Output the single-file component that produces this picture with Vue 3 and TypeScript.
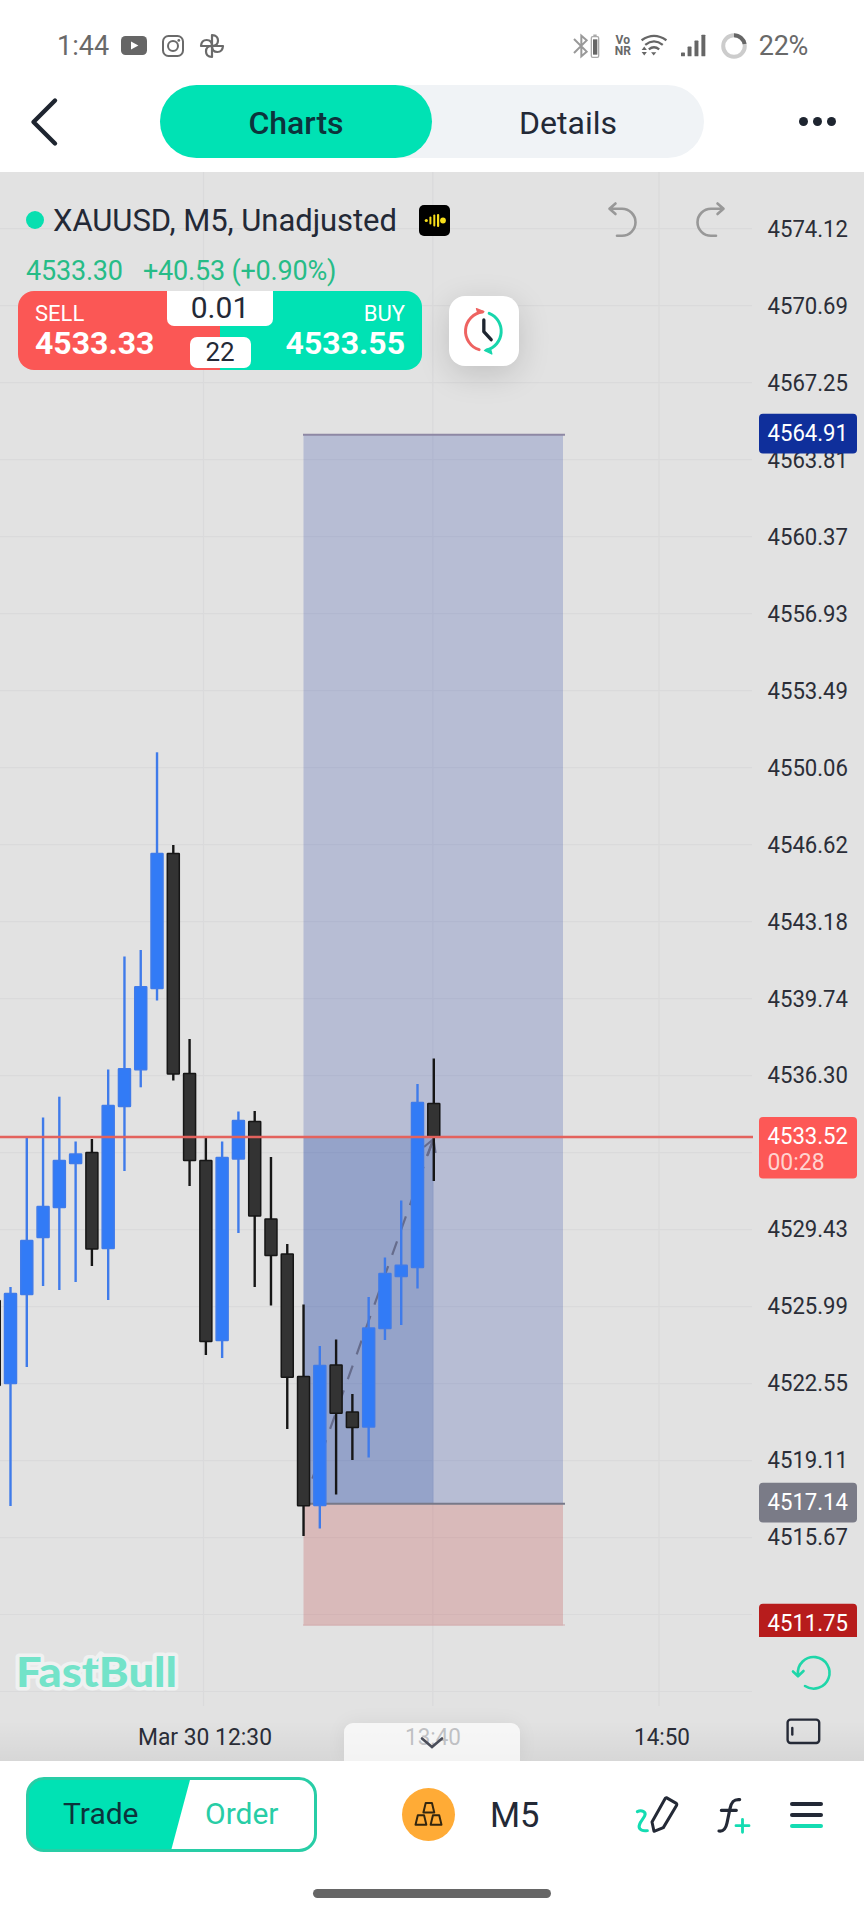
<template>
  <div class="page">
    <!-- status bar -->
    <div class="status-bar">
      <span class="status-time">1:44</span>
      <svg class="icon-youtube" viewBox="0 0 26 19">
        <rect width="26" height="19" rx="4.5" fill="#666" />
        <path d="M10 5.4 17.4 9.5 10 13.6Z" fill="#fff" />
      </svg>
      <svg class="icon-instagram" viewBox="0 0 24 24" fill="none" stroke="#6a6a6a" stroke-width="2">
        <rect x="2" y="2" width="20" height="20" rx="5.5" />
        <circle cx="12" cy="12" r="5" />
        <circle cx="17.8" cy="6.4" r="1.4" fill="#6a6a6a" stroke="none" />
      </svg>
      <svg class="icon-photos" viewBox="0 0 26 26" fill="none" stroke="#6a6a6a" stroke-width="2.2" stroke-linejoin="round">
        <path v-for="angle in [0, 90, 180, 270]" :key="angle" d="M13 13V2c4 .3 6 2.6 6 5.6S17 13 13 13Z" :transform="`rotate(${angle} 13 13)`" />
      </svg>

      <div class="status-right">
        <svg class="icon-bluetooth" viewBox="0 0 84 78" fill="none">
          <path d="M6 18 44 56 28 70V8L44 22 6 60" stroke="#999" stroke-width="6" />
          <rect x="58" y="11" width="22" height="62" rx="4" stroke="#aaa" stroke-width="4" />
          <path d="M64 7h10" stroke="#aaa" stroke-width="5" />
          <path d="M69.5 19v46" stroke="#666" stroke-width="13" />
        </svg>
        <span class="vonr"><span>Vo</span><span>NR</span></span>
        <svg class="icon-wifi" viewBox="0 0 80 70" fill="none" stroke="#666" stroke-width="7">
          <path d="M2 19Q40-8 78 19" />
          <path d="M13 33Q40 12 67 33" />
          <path d="M24 47Q40 34 56 47" />
          <path d="M31 56h16l-8 10ZM2 49l8-11 8 11ZM2 55h16l-8 11Z" fill="#666" stroke="none" />
        </svg>
        <svg class="icon-signal" viewBox="0 0 76 68" fill="#666">
          <rect x="0" y="55" width="12" height="12" rx="2" />
          <rect x="20" y="37" width="12" height="30" rx="2" />
          <rect x="41" y="19" width="12" height="48" rx="2" />
          <rect x="62" y="1" width="12" height="66" rx="2" />
        </svg>
        <svg class="icon-battery" viewBox="0 0 26 26" fill="none" stroke-width="4">
          <circle cx="13" cy="13" r="10.8" stroke="#ccc" />
          <path d="M13 2.2A10.8 10.8 0 0 1 23.6 11" stroke="#666" />
        </svg>
        <span class="status-percent">22%</span>
      </div>
    </div>

    <!-- top navigation -->
    <header class="nav">
      <svg class="nav-back" viewBox="0 0 30 50" fill="none" stroke="#1e2530" stroke-width="4.4" stroke-linecap="round" stroke-linejoin="round">
        <path d="M25 3.5 3.5 25 25 46.5" />
      </svg>
      <div class="tabs">
        <button
          v-for="tab in tabs"
          :key="tab"
          :class="['tab', { 'tab-active': tab === activeTab }]"
          @click="activeTab = tab"
        >
          {{ tab }}
        </button>
      </div>
      <div class="nav-more"><i></i><i></i><i></i></div>
    </header>

    <!-- chart -->
    <main class="chart">
      <svg class="chart-canvas" viewBox="0 172 864 1589">
        <defs>
          <clipPath id="axisClip"><rect x="750" y="172" width="114" height="1465" /></clipPath>
        </defs>

        <g stroke="#dadadb" stroke-width="1.2">
          <line v-for="n in 20" :key="`h${n}`" x1="0" x2="752" :y1="gridY(n - 1)" :y2="gridY(n - 1)" />
          <line v-for="x in gridX" :key="`v${x}`" :x1="x" :x2="x" y1="172" y2="1706" />
        </g>

        <!-- long position tool -->
        <rect x="303.5" y="434.5" width="259.5" height="1069" fill="#102ea0" fill-opacity=".2" />
        <rect x="303.5" y="1137" width="130" height="366.5" fill="#0e3c9e" fill-opacity=".2" />
        <rect x="303.5" y="1503.5" width="259.5" height="122" fill="#b71c1c" fill-opacity=".2" />
        <path d="M303 434.8H565" stroke="#8e88a4" stroke-width="2" />
        <path d="M303 1503.8H565" stroke="#777989" stroke-width="2" />
        <path d="M303 1625H565" stroke="#d3adb0" stroke-width="1.2" />
        <g fill="none" stroke="#666c8c" stroke-width="2.2">
          <path d="M303.5 1503.5 433.5 1139" stroke-dasharray="14.4 12" />
          <path d="M424 1147 433.5 1139 435.5 1153M433.5 1139 427 1156" />
        </g>

        <!-- candles -->
        <g v-for="(c, i) in candles" :key="i" :class="c[0] ? 'candle-up' : 'candle-down'">
          <line :x1="candleX(i)" :x2="candleX(i)" :y1="c[1]" :y2="c[4]" stroke-width="2.4" />
          <rect :x="candleX(i) - 6" :y="c[2] + 0.5" width="12" :height="c[3] - c[2] - 1" rx=".5" stroke-width="1.5" />
        </g>

        <path d="M0 1137H753" stroke="#e3625d" stroke-width="2.4" />

        <!-- price axis -->
        <g class="axis-text">
          <text
            v-for="label in axisLabels"
            :key="label.text"
            x="767.5"
            :y="label.y + 7.9"
            textLength="80.5"
            lengthAdjust="spacingAndGlyphs"
          >{{ label.text }}</text>
        </g>
        <g clip-path="url(#axisClip)">
          <g v-for="tag in priceTags" :key="tag.price">
            <rect x="759" :y="tag.y" width="98" :height="tag.height" rx="4" :fill="tag.color" />
            <text class="tag-text" x="767.5" :y="tag.y + 27" textLength="80.5" lengthAdjust="spacingAndGlyphs">{{ tag.price }}</text>
            <text v-if="tag.countdown" class="tag-text tag-countdown" x="767.5" :y="tag.y + 52.5" textLength="57" lengthAdjust="spacingAndGlyphs">{{ tag.countdown }}</text>
          </g>
        </g>

        <!-- time axis -->
        <g class="axis-text">
          <text x="138" y="1745" textLength="134" lengthAdjust="spacingAndGlyphs">Mar 30 12:30</text>
          <text x="405" y="1745" textLength="56" lengthAdjust="spacingAndGlyphs">13:40</text>
          <text x="634" y="1745" textLength="56" lengthAdjust="spacingAndGlyphs">14:50</text>
        </g>

        <!-- watermark -->
        <g class="watermark">
          <path d="M92 1666 101 1655V1666Z" />
          <text x="16" y="1687" textLength="161" lengthAdjust="spacingAndGlyphs">FastBull</text>
        </g>

        <!-- reset scale / fullscreen -->
        <g fill="none" stroke-linecap="round" stroke-linejoin="round">
          <path d="M805 1686A15.8 15.8 0 1 0 798 1674.5M793 1671.5 798 1676.3 803.5 1671" stroke="#1fd6a9" stroke-width="2.6" />
          <rect x="787.6" y="1719.6" width="31.6" height="23.4" rx="3" stroke="#262b38" stroke-width="2.4" />
          <path d="M792.3 1728V1734.5" stroke="#262b38" stroke-width="2.4" />
        </g>
      </svg>

      <div class="overlay">
        <div class="symbol-row">
          <i class="live-dot"></i>
          <span class="symbol-name">XAUUSD, M5, Unadjusted</span>
          <svg class="symbol-badge" viewBox="0 0 31 31">
            <rect width="31" height="31" rx="5" fill="#000" />
            <g fill="#f7de1b">
              <circle cx="7.3" cy="15.5" r="1.6" />
              <rect x="10.4" y="11.5" width="2" height="8" rx="1" />
              <rect x="14.3" y="9.5" width="2" height="12" rx="1" />
              <rect x="18" y="9" width="2.2" height="13" rx="1" />
              <circle cx="24" cy="15.5" r="2.9" />
            </g>
          </svg>
          <svg class="history-icon" viewBox="0 0 30 36">
            <path d="M8.5 3.5 2.500 8.8 8.5 14M2.5 8.8H15A13.5 13.5 0 0 1 15 35.8H10" />
          </svg>
          <svg class="history-icon redo" viewBox="0 0 30 36">
            <path d="M8.5 3.5 2.500 8.8 8.5 14M2.5 8.8H15A13.5 13.5 0 0 1 15 35.8H10" />
          </svg>
        </div>

        <div class="quote-row">
          <span class="quote-last">4533.30</span>
          <span class="quote-change">+40.53 (+0.90%)</span>
        </div>

        <div class="order-row">
          <div class="order-panel">
            <div class="side side-sell">
              <span class="side-name">SELL</span>
              <b class="side-price">4533.33</b>
            </div>
            <div class="side side-buy">
              <span class="side-name">BUY</span>
              <b class="side-price">4533.55</b>
            </div>
            <div class="order-middle">
              <span class="volume">0.01</span>
              <span class="spread">22</span>
            </div>
          </div>
          <div class="clock-card">
            <svg viewBox="0 0 140 150" fill="none" stroke-width="9" stroke-linecap="round" stroke-linejoin="round">
              <path d="M54 131A58 58 0 0 1 64 18" stroke="#ee6361" />
              <path d="M46 8 68 17 50 21Z" fill="#ee6361" stroke="#ee6361" stroke-width="4" />
              <path d="M84 22A58 58 0 0 1 76 132" stroke="#18d6ac" />
              <path d="M92 144 70 133 88 129Z" fill="#18d6ac" stroke="#18d6ac" stroke-width="4" />
              <path d="M68 42V77L90 101" stroke="#1e2530" stroke-width="10" />
            </svg>
          </div>
        </div>

        <div class="drawer-handle">
          <svg viewBox="0 0 24 14" fill="none" stroke="#4a4d59" stroke-width="2.6" stroke-linecap="round">
            <path d="M2 2.5 12 11 22 2.5" />
          </svg>
        </div>
      </div>
    </main>

    <!-- bottom toolbar -->
    <footer class="toolbar">
      <div class="toolbar-row">
        <div class="trade-switch">
          <span class="trade">Trade</span>
          <span class="order">Order</span>
        </div>
        <div class="asset">
          <svg viewBox="0 0 90 76" fill="none" stroke="#33260f" stroke-width="6" stroke-linejoin="round">
            <path v-for="p in ['28,3', '4,40', '50,40']" :key="p" d="M7 0H26L33 29H0Z" :transform="`translate(${p})`" />
          </svg>
        </div>
        <span class="timeframe">M5</span>
        <svg class="tool-draw" viewBox="600 485 150 130" fill="none" stroke-linecap="round" stroke-linejoin="round">
          <path d="M616 541C628 534 644 541 638 554C633 565 614 582 624 593C629 600 638 599 646 598" stroke="#14dcb2" stroke-width="9" />
          <path d="M703 499 733 516C735 518 735 520 734 522L694 589 666 600 660 572 700 501Z" stroke="#232936" stroke-width="9" />
        </svg>
        <svg class="tool-fx" viewBox="850 490 120 125" fill="none" stroke-linecap="round">
          <path d="M924 507C906 505 899 514 895 534L886 577C882 596 875 603 862 601M869 539H914" stroke="#232936" stroke-width="9.5" />
          <path d="M913 585H952M932.5 566V605" stroke="#14dcb2" stroke-width="8.5" />
        </svg>
        <div class="tool-menu"><i></i><i></i><i></i></div>
      </div>
      <div class="home-indicator"></div>
    </footer>
  </div>
</template>

<script setup lang="ts">
import { ref } from 'vue'

interface PriceTag {
  price: string
  y: number
  height: number
  color: string
  countdown?: string
}

// up flag, high, body top, body bottom, low
type Candle = [number, number, number, number, number]

const tabs = ['Charts', 'Details']
const activeTab = ref('Charts')

const gridX = [203.5, 432.8, 659]
const gridY = (n: number) => 228.7 + n * 76.99

const prices = [
  '4574.12', '4570.69', '4567.25', '4563.81', '4560.37', '4556.93',
  '4553.49', '4550.06', '4546.62', '4543.18', '4539.74', '4536.30',
  '', '4529.43', '4525.99', '4522.55', '4519.11', '4515.67'
]

const axisLabels = prices
  .map((text, n) => ({ text, y: gridY(n) }))
  .filter((label) => label.text)

const priceTags: PriceTag[] = [
  { price: '4564.91', y: 413.8, height: 39.7, color: '#0f2f9b' },
  { price: '4533.52', y: 1117, height: 61.5, color: '#fd5856', countdown: '00:28' },
  { price: '4517.14', y: 1482.8, height: 39.7, color: '#7a7b87' },
  { price: '4511.75', y: 1603.8, height: 39.7, color: '#b71c1c' }
]

const candles: Candle[] = [
  [0, 1300, 1300, 1386, 1386],
  [1, 1287, 1293, 1384, 1506],
  [1, 1138, 1240, 1295, 1367],
  [1, 1117.5, 1206, 1238, 1286],
  [1, 1096.7, 1160, 1208, 1290],
  [1, 1141.5, 1153.5, 1164, 1282],
  [0, 1139, 1152, 1249.5, 1266],
  [1, 1069.5, 1105, 1249, 1300],
  [1, 956.5, 1068.3, 1107, 1171],
  [1, 950, 986.3, 1070.3, 1087.3],
  [1, 752.3, 853, 989, 1000.5],
  [0, 845, 853, 1074.5, 1080.5],
  [0, 1039, 1073, 1161, 1186],
  [0, 1136, 1160, 1342, 1355],
  [1, 1141.5, 1157, 1341, 1358],
  [1, 1111.5, 1120, 1159.5, 1233],
  [0, 1111, 1121, 1216.5, 1287],
  [0, 1157, 1218.5, 1256, 1305.5],
  [0, 1244, 1253.5, 1377.7, 1429],
  [0, 1304.5, 1376, 1506.3, 1536],
  [1, 1346, 1365, 1506, 1528.5],
  [0, 1339.5, 1364.5, 1413.7, 1494.5],
  [0, 1394, 1411.5, 1428, 1460],
  [1, 1297, 1327.5, 1427.5, 1457.5],
  [1, 1257.5, 1273, 1329, 1340],
  [1, 1200.5, 1264.7, 1277, 1325],
  [1, 1084, 1102, 1268, 1288.5],
  [0, 1058.5, 1103, 1137, 1181]
]

const candleX = (i: number) => 10.5 + (i - 1) * 16.28
</script>

<style>
body {
  margin: 0;
  background: #fff;
}
</style>

<style scoped>
.page {
  width: 864px;
  height: 1920px;
  display: flex;
  flex-direction: column;
  overflow: hidden;
  background: #fff;
  color: #232936;
  font-family: Roboto, 'Liberation Sans', sans-serif;
}

.page svg {
  display: block;
  flex: none;
}

/* status bar */
.status-bar {
  height: 85px;
  box-sizing: border-box;
  padding: 6px 56px 0 57px;
  display: flex;
  align-items: center;
  color: #696969;
  font-size: 27px;
}

.status-time {
  width: 64px;
}

.icon-youtube {
  width: 26px;
  height: 19px;
}

.icon-instagram {
  width: 24px;
  height: 24px;
  margin-left: 14px;
}

.icon-photos {
  width: 26px;
  height: 26px;
  margin-left: 14px;
}

.status-right {
  display: flex;
  align-items: center;
  margin-left: auto;
}

.icon-bluetooth {
  width: 28px;
  height: 26px;
}

.vonr {
  display: flex;
  flex-direction: column;
  align-items: center;
  width: 20px;
  margin-left: 13px;
  font-size: 12px;
  font-weight: 700;
  line-height: 11px;
}

.icon-wifi {
  width: 26px;
  height: 23px;
  margin-left: 8px;
}

.icon-signal {
  width: 25px;
  height: 23px;
  margin-left: 14px;
}

.icon-battery {
  width: 26px;
  height: 26px;
  margin-left: 15px;
}

.status-percent {
  margin-left: 12px;
  letter-spacing: -0.3px;
}

/* top navigation */
.nav {
  height: 87px;
  box-sizing: border-box;
  padding: 0 28px 14px 30px;
  display: flex;
  align-items: center;
}

.nav-back {
  width: 30px;
  height: 50px;
}

.tabs {
  display: flex;
  width: 544px;
  height: 73px;
  margin-left: 100px;
  border-radius: 37px;
  background: #f0f3f6;
}

.tab {
  flex: 1;
  padding: 2px 0 0;
  border: none;
  border-radius: 37px;
  background: none;
  color: #232936;
  font: 400 32px Roboto, sans-serif;
}

.tab-active {
  background: #00e2b4;
  color: #0c333c;
  font-weight: 500;
}

.nav-more {
  display: flex;
  gap: 5px;
  margin-left: auto;
}

.nav-more i {
  width: 9px;
  height: 9px;
  border-radius: 50%;
  background: #1e2530;
}

/* chart */
.chart {
  display: grid;
  height: 1589px;
  background: #e2e2e2;
}

.chart-canvas,
.overlay {
  grid-area: 1 / 1;
  width: 864px;
  height: 1589px;
}

.candle-up {
  fill: #327bf6;
  stroke: #3f7bea;
}

.candle-down {
  fill: #333;
  stroke: #161616;
}

.axis-text {
  font-size: 24px;
  fill: #2b2e38;
}

.tag-text {
  font-size: 24px;
  fill: #fff;
}

.tag-countdown {
  fill: #ffd3d0;
}

.watermark {
  fill: #73e3c9;
  stroke: #eff1f1;
  stroke-width: 7px;
  stroke-linejoin: round;
  paint-order: stroke;
  font: 900 41px Lato, sans-serif;
}

.overlay {
  box-sizing: border-box;
  display: flex;
  flex-direction: column;
  padding-top: 27px;
  background: linear-gradient(to top, rgba(0, 0, 0, 0.05), transparent 40px);
}

.symbol-row {
  display: flex;
  align-items: center;
  height: 42px;
  padding-left: 26px;
}

.live-dot {
  width: 18px;
  height: 18px;
  border-radius: 50%;
  background: #08dfb0;
}

.symbol-name {
  width: 366px;
  margin-left: 9px;
  font-size: 31px;
  letter-spacing: -0.05px;
  white-space: nowrap;
}

.symbol-badge {
  width: 31px;
  height: 31px;
}

.history-icon {
  width: 30px;
  height: 36px;
  margin: -5px 0 0 157px;
  overflow: visible;
  fill: none;
  stroke: #989898;
  stroke-width: 2.6px;
  stroke-linecap: round;
  stroke-linejoin: round;
}

.history-icon.redo {
  margin-left: 59px;
  transform: scaleX(-1);
}

.quote-row {
  display: flex;
  align-items: center;
  height: 41px;
  margin-top: 9px;
  padding-left: 26px;
  color: #27bc87;
  font-size: 27px;
}

.quote-last {
  width: 117px;
  letter-spacing: -0.2px;
}

.quote-change {
  letter-spacing: -0.2px;
}

.order-row {
  display: flex;
  align-items: center;
  padding-left: 18px;
}

.order-panel {
  display: grid;
  grid-template-columns: 202px 202px;
  height: 79px;
  border-radius: 16px;
  overflow: hidden;
}

.side {
  grid-row: 1;
  display: flex;
  flex-direction: column;
  padding: 10px 17px 0;
  color: #fff;
}

.side-sell {
  grid-column: 1;
  background: #fb5755;
}

.side-buy {
  grid-column: 2;
  align-items: flex-end;
  background: #00e2b4;
}

.side-name {
  font-size: 22px;
  line-height: 25px;
}

.side-price {
  font-size: 32px;
  line-height: 35px;
}

.order-middle {
  grid-area: 1 / 1 / 2 / 3;
  display: flex;
  flex-direction: column;
  align-items: center;
  justify-self: center;
}

.volume {
  width: 106px;
  height: 35px;
  border-radius: 0 0 7px 7px;
  background: #fff;
  font-size: 30px;
  line-height: 33px;
  text-align: center;
}

.spread {
  width: 61px;
  height: 31px;
  margin-top: 11px;
  border-radius: 7px;
  background: #fff;
  font-size: 26px;
  line-height: 30px;
  text-align: center;
}

.clock-card {
  display: flex;
  align-items: center;
  justify-content: center;
  width: 70px;
  height: 70px;
  margin-left: 27px;
  border-radius: 16px;
  background: #fff;
  box-shadow: 0 8px 32px rgba(0, 0, 0, 0.15);
}

.clock-card svg {
  width: 47px;
  height: 50px;
}

.drawer-handle {
  display: flex;
  align-items: flex-start;
  justify-content: center;
  width: 176px;
  height: 38.5px;
  margin: auto auto 0;
  border-radius: 9px 9px 0 0;
  background: rgba(255, 255, 255, 0.7);
  box-shadow: 0 0 20px rgba(0, 0, 0, 0.06);
}

.drawer-handle svg {
  width: 24px;
  height: 14px;
  margin-top: 13px;
}

/* bottom toolbar */
.toolbar {
  flex: 1;
  background: #fff;
}

.toolbar-row {
  display: flex;
  align-items: center;
  height: 75px;
  padding: 16px 0 0 26px;
}

.trade-switch {
  display: flex;
  box-sizing: border-box;
  width: 291px;
  height: 75px;
  border: 3px solid #28cda6;
  border-radius: 18px;
  background: linear-gradient(105deg, #00e2b4 0 155px, #fff 156px);
  font-size: 30px;
  line-height: 67px;
}

.trade {
  width: 142px;
  padding-left: 34px;
  color: #0c333c;
}

.order {
  color: #28cda6;
}

.asset {
  display: flex;
  align-items: center;
  justify-content: center;
  width: 53px;
  height: 53px;
  margin-left: 85px;
  border-radius: 50%;
  background: #ffab36;
}

.asset svg {
  width: 30px;
  height: 25px;
}

.timeframe {
  width: 52px;
  margin-left: 35px;
  font-size: 34.5px;
}

.tool-draw {
  width: 50px;
  height: 43.3px;
  margin-left: 90px;
}

.tool-fx {
  width: 40px;
  height: 41.7px;
  margin-left: 33px;
}

.tool-menu {
  display: flex;
  flex-direction: column;
  gap: 7px;
  margin-left: 35px;
}

.tool-menu i {
  width: 33px;
  height: 4px;
  border-radius: 2px;
  background: #232936;
}

.tool-menu i:last-child {
  background: #14dcb2;
}

.home-indicator {
  width: 238px;
  height: 9px;
  margin: 37px auto 0;
  border-radius: 5px;
  background: #666;
}
</style>
